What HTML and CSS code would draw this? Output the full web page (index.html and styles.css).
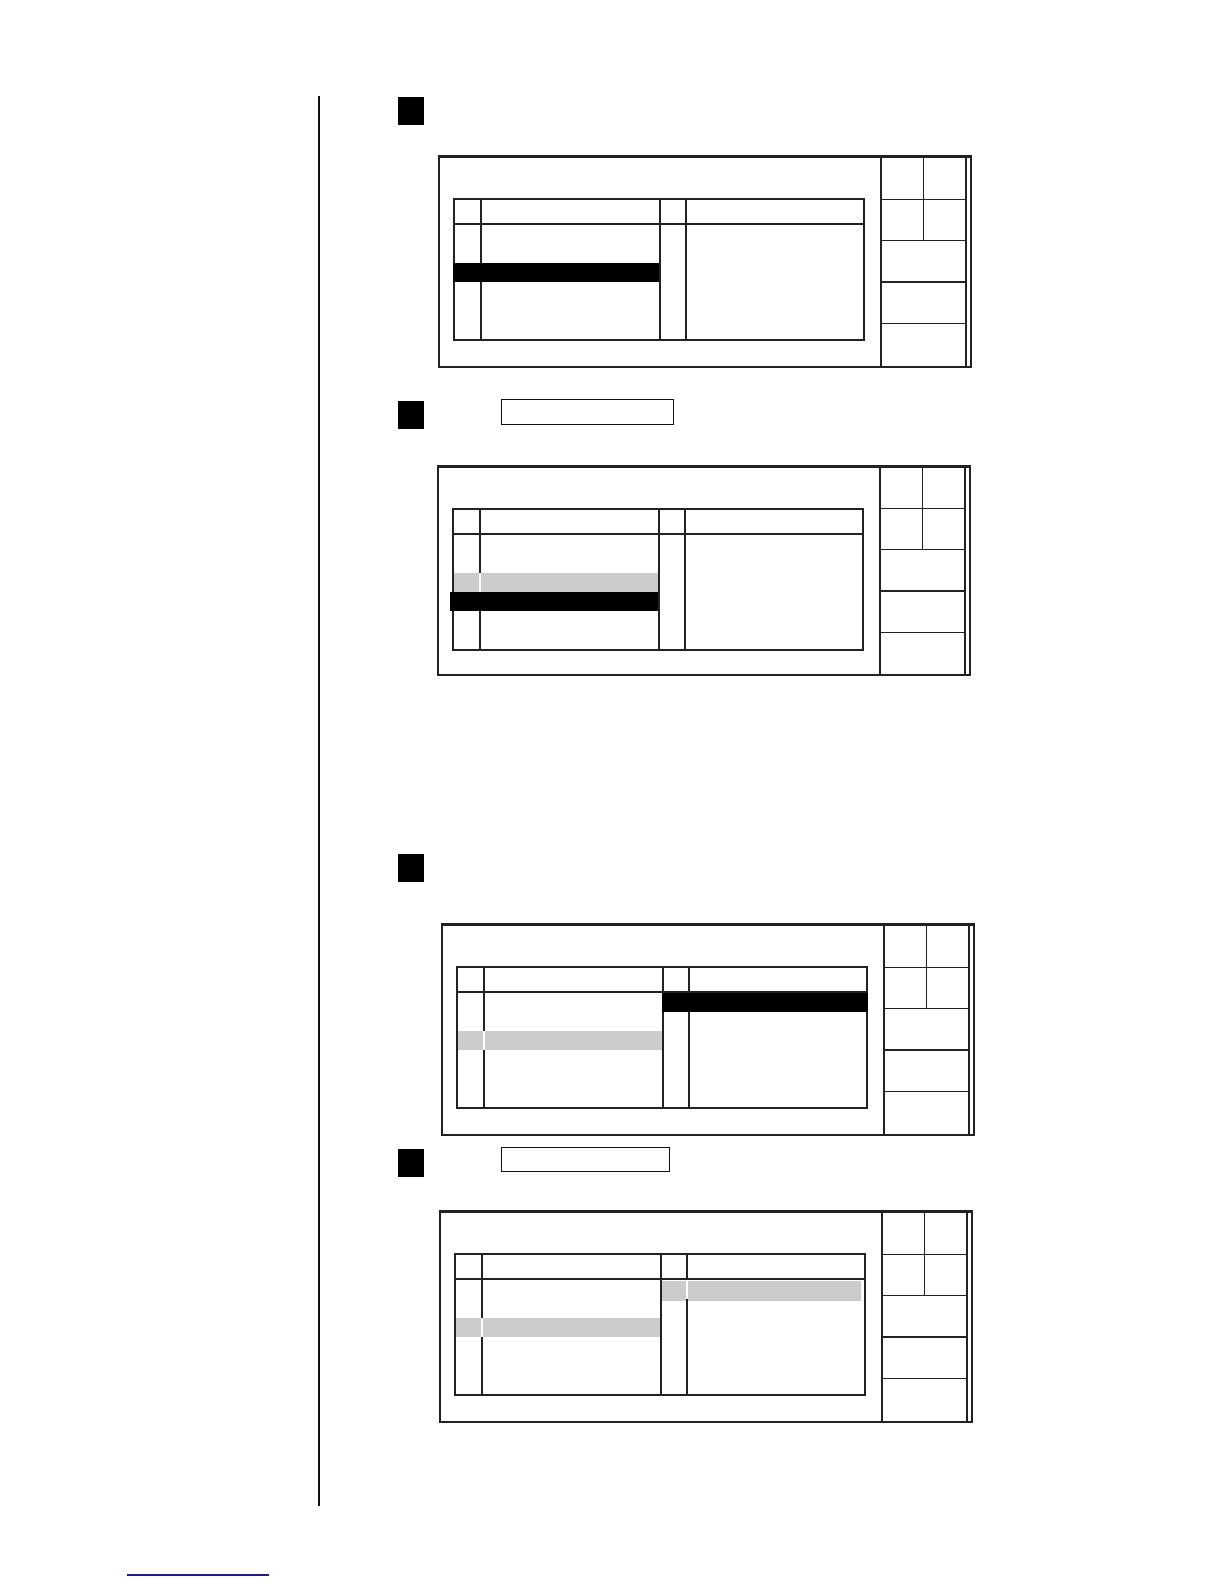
FILE: index.html
```html
<!DOCTYPE html>
<html>
<head>
<meta charset="utf-8">
<title>Screens</title>
<link rel="stylesheet" href="styles.css">
</head>
<body>
<div class="page">
  <div class="content">
    <div class="step st1"><div class="num"></div></div>
    <div class="screen sc1">
      <div class="main">
        <div class="table">
          <div class="half left">
            <div class="head"><div class="c1"></div><div class="c2"></div></div>
            <div class="body">
              <div class="row"><div class="c1"></div><div class="c2"></div></div>
              <div class="row"><div class="c1"></div><div class="c2"></div></div>
              <div class="row sel"><div class="c1"></div><div class="c2"></div></div>
              <div class="row"><div class="c1"></div><div class="c2"></div></div>
              <div class="row"><div class="c1"></div><div class="c2"></div></div>
              <div class="row"><div class="c1"></div><div class="c2"></div></div>
            </div>
          </div>
          <div class="half right">
            <div class="head"><div class="c1"></div><div class="c2"></div></div>
            <div class="body">
              <div class="row"><div class="c1"></div><div class="c2"></div></div>
              <div class="row"><div class="c1"></div><div class="c2"></div></div>
              <div class="row"><div class="c1"></div><div class="c2"></div></div>
              <div class="row"><div class="c1"></div><div class="c2"></div></div>
              <div class="row"><div class="c1"></div><div class="c2"></div></div>
              <div class="row"><div class="c1"></div><div class="c2"></div></div>
            </div>
          </div>
        </div>
      </div>
      <div class="panel">
        <div class="cell half-cell"></div><div class="cell half-cell end"></div>
        <div class="cell half-cell"></div><div class="cell half-cell end"></div>
        <div class="cell wide"></div>
        <div class="cell wide"></div>
        <div class="cell wide last"></div>
      </div>
      <div class="gap"></div>
    </div>

    <div class="step st2"><div class="num"></div><div class="field"></div></div>
    <div class="screen sc2">
      <div class="main">
        <div class="table">
          <div class="half left">
            <div class="head"><div class="c1"></div><div class="c2"></div></div>
            <div class="body">
              <div class="row"><div class="c1"></div><div class="c2"></div></div>
              <div class="row"><div class="c1"></div><div class="c2"></div></div>
              <div class="row dim"><div class="c1"></div><div class="c2"></div></div>
              <div class="row sel wide-sel"><div class="c1"></div><div class="c2"></div></div>
              <div class="row"><div class="c1"></div><div class="c2"></div></div>
              <div class="row"><div class="c1"></div><div class="c2"></div></div>
            </div>
          </div>
          <div class="half right">
            <div class="head"><div class="c1"></div><div class="c2"></div></div>
            <div class="body">
              <div class="row"><div class="c1"></div><div class="c2"></div></div>
              <div class="row"><div class="c1"></div><div class="c2"></div></div>
              <div class="row"><div class="c1"></div><div class="c2"></div></div>
              <div class="row"><div class="c1"></div><div class="c2"></div></div>
              <div class="row"><div class="c1"></div><div class="c2"></div></div>
              <div class="row"><div class="c1"></div><div class="c2"></div></div>
            </div>
          </div>
        </div>
      </div>
      <div class="panel">
        <div class="cell half-cell"></div><div class="cell half-cell end"></div>
        <div class="cell half-cell"></div><div class="cell half-cell end"></div>
        <div class="cell wide"></div>
        <div class="cell wide"></div>
        <div class="cell wide last"></div>
      </div>
      <div class="gap"></div>
    </div>

    <div class="step st3"><div class="num"></div></div>
    <div class="screen sc3">
      <div class="main">
        <div class="table">
          <div class="half left">
            <div class="head"><div class="c1"></div><div class="c2"></div></div>
            <div class="body">
              <div class="row"><div class="c1"></div><div class="c2"></div></div>
              <div class="row"><div class="c1"></div><div class="c2"></div></div>
              <div class="row dim"><div class="c1"></div><div class="c2"></div></div>
              <div class="row"><div class="c1"></div><div class="c2"></div></div>
              <div class="row"><div class="c1"></div><div class="c2"></div></div>
              <div class="row"><div class="c1"></div><div class="c2"></div></div>
            </div>
          </div>
          <div class="half right">
            <div class="head"><div class="c1"></div><div class="c2"></div></div>
            <div class="body">
              <div class="row sel"><div class="c1"></div><div class="c2"></div></div>
              <div class="row"><div class="c1"></div><div class="c2"></div></div>
              <div class="row"><div class="c1"></div><div class="c2"></div></div>
              <div class="row"><div class="c1"></div><div class="c2"></div></div>
              <div class="row"><div class="c1"></div><div class="c2"></div></div>
              <div class="row"><div class="c1"></div><div class="c2"></div></div>
            </div>
          </div>
        </div>
      </div>
      <div class="panel">
        <div class="cell half-cell"></div><div class="cell half-cell end"></div>
        <div class="cell half-cell"></div><div class="cell half-cell end"></div>
        <div class="cell wide"></div>
        <div class="cell wide"></div>
        <div class="cell wide last"></div>
      </div>
      <div class="gap"></div>
    </div>

    <div class="step st4"><div class="num"></div><div class="field short"></div></div>
    <div class="screen sc4">
      <div class="main">
        <div class="table">
          <div class="half left">
            <div class="head"><div class="c1"></div><div class="c2"></div></div>
            <div class="body">
              <div class="row"><div class="c1"></div><div class="c2"></div></div>
              <div class="row"><div class="c1"></div><div class="c2"></div></div>
              <div class="row dim"><div class="c1"></div><div class="c2"></div></div>
              <div class="row"><div class="c1"></div><div class="c2"></div></div>
              <div class="row"><div class="c1"></div><div class="c2"></div></div>
              <div class="row"><div class="c1"></div><div class="c2"></div></div>
            </div>
          </div>
          <div class="half right">
            <div class="head"><div class="c1"></div><div class="c2"></div></div>
            <div class="body">
              <div class="row dim inset"><div class="c1"></div><div class="c2"></div></div>
              <div class="row"><div class="c1"></div><div class="c2"></div></div>
              <div class="row"><div class="c1"></div><div class="c2"></div></div>
              <div class="row"><div class="c1"></div><div class="c2"></div></div>
              <div class="row"><div class="c1"></div><div class="c2"></div></div>
              <div class="row"><div class="c1"></div><div class="c2"></div></div>
            </div>
          </div>
        </div>
      </div>
      <div class="panel">
        <div class="cell half-cell"></div><div class="cell half-cell end"></div>
        <div class="cell half-cell"></div><div class="cell half-cell end"></div>
        <div class="cell wide"></div>
        <div class="cell wide"></div>
        <div class="cell wide last"></div>
      </div>
      <div class="gap"></div>
    </div>
  </div>
  <div class="footer-rule"></div>
</div>
</body>
</html>
```

FILE: styles.css
```css
* { box-sizing: border-box; }

html, body {
  margin: 0;
  padding: 0;
  background: #ffffff;
  font-family: "Liberation Sans", Arial, sans-serif;
}

.page {
  width: 1224px;
  height: 1584px;
  padding-top: 96px;
}

.content {
  margin-left: 318px;
  width: 700px;
  height: 1410px;
  border-left: 2px solid #111;
  padding-top: 1px;
}

/* step heading rows */
.step {
  display: flex;
  align-items: flex-start;
  margin-left: 78px;
}

.num {
  width: 26px;
  height: 28px;
  background: #000;
  flex: none;
}

.field {
  width: 173px;
  height: 26px;
  margin-left: 77px;
  border: 1.5px solid #111;
  flex: none;
}

.field.short {
  width: 169px;
  height: 25px;
}

.st2 .num, .st4 .num { margin-top: 2px; }

.st1 { margin-top: 0; }
.st2 { margin-top: 31px; }
.st3 { margin-top: 178px; }
.st4 { margin-top: 11px; }

/* screens */
.screen {
  display: flex;
  width: 534px;
  height: 213px;
  border: 2px solid #222;
  border-top-width: 3px;
}

.sc1 { margin-top: 30px; margin-left: 118px; }
.sc2 { margin-top: 36px; margin-left: 117px; height: 211px; }
.sc3 { margin-top: 41px; margin-left: 121px; }
.sc4 { margin-top: 33px; margin-left: 119px; }

.main {
  flex: 1;
  padding: 40px 0 0 13px;
}

.table {
  display: flex;
  width: 412px;
  border: 2px solid #222;
}

.half {
  display: flex;
  flex-direction: column;
}

.half.left { width: 204px; }
.half.right { width: 204px; border-left: 2px solid #222; }

.head {
  display: grid;
  grid-template-columns: 27px 1fr;
  height: 25px;
  border-bottom: 2px solid #222;
}

.half.right .head,
.half.right .row { grid-template-columns: 26px 1fr; }

.head .c1 { border-right: 2px solid #222; }

.body {
  display: flex;
  flex-direction: column;
}

.row {
  display: grid;
  grid-template-columns: 27px 1fr;
  height: 19px;
}

.row .c1 { border-right: 2px solid #222; }

.row.sel {
  background: #000;
}

.row.sel .c1 { border-right-color: #000; }

.half.left .row.sel { margin-left: -2px; grid-template-columns: 29px 1fr; }
.half.left .row.sel.wide-sel { margin-left: -4px; grid-template-columns: 31px 1fr; }
.half.right .row.sel { margin: 0 -2px 0 -2px; grid-template-columns: 28px 1fr; }

.row.dim .c1,
.row.dim .c2 {
  background: #cccccc;
}

.row.dim .c1 { border-right-color: #fff; }

.row.inset { padding: 1px 3px 0 0; height: 21px; margin-bottom: -2px; }

/* right side function panel */
.panel {
  width: 87px;
  display: grid;
  grid-template-columns: 1fr 1fr;
  grid-template-rows: repeat(5, 1fr);
  border-left: 2px solid #222;
  border-right: 2px solid #222;
  flex: none;
}

.cell {
  border-bottom: 1.5px solid #222;
}

.cell.half-cell { border-right: 1.5px solid #222; }
.cell.half-cell.end { border-right: none; }
.cell.wide { grid-column: span 2; }
.cell.wide:nth-child(5) { border-bottom-width: 2.5px; }
.cell.last { border-bottom: none; }

.gap {
  width: 3px;
  flex: none;
}

.footer-rule {
  margin-left: 127px;
  width: 142px;
  margin-top: 68px;
  border-top: 2px solid #1c1c88;
}
```
